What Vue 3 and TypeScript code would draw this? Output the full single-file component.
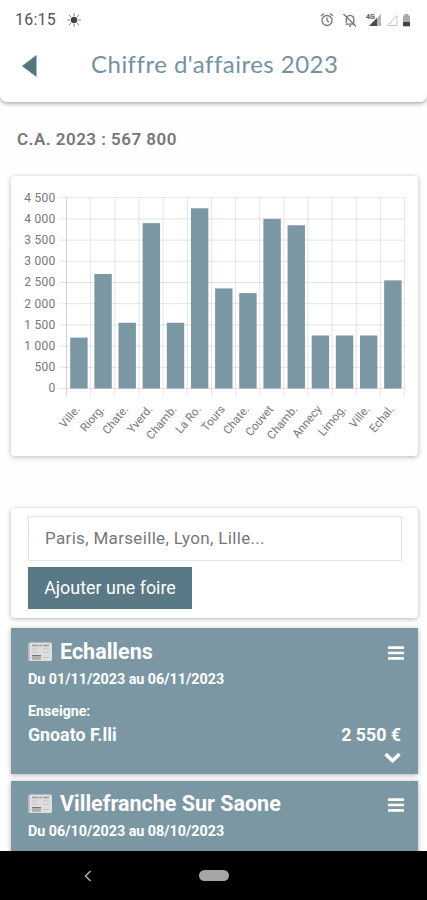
<script setup lang="ts">
interface Bar { label: string; value: number }
interface Fair { name: string; dates: string; sale?: { sign: string; amount: string } }

const bars: Bar[] = [
  { label: 'Ville.', value: 1200 },
  { label: 'Riorg.', value: 2700 },
  { label: 'Chate.', value: 1550 },
  { label: 'Yverd.', value: 3900 },
  { label: 'Chamb.', value: 1550 },
  { label: 'La Ro.', value: 4250 },
  { label: 'Tours', value: 2360 },
  { label: 'Chate.', value: 2250 },
  { label: 'Couvet', value: 4000 },
  { label: 'Chamb.', value: 3850 },
  { label: 'Annecy', value: 1250 },
  { label: 'Limog.', value: 1250 },
  { label: 'Ville.', value: 1250 },
  { label: 'Echal.', value: 2550 },
]
const fairs: Fair[] = [
  { name: 'Echallens', dates: 'Du 01/11/2023 au 06/11/2023', sale: { sign: 'Gnoato F.lli', amount: '2 550 €' } },
  { name: 'Villefranche Sur Saone', dates: 'Du 06/10/2023 au 08/10/2023' },
]
const ticks = ['0', '500', '1 000', '1 500', '2 000', '2 500', '3 000', '3 500', '4 000', '4 500']

const left = 55.5
const base = 212.5
const col = 24.15
const unit = 21.2 / 500
const colX = (i: number): number => left + i * col
const tickY = (i: number): number => base - i * 21.2
</script>

<template>
  <div class="screen">
    <header class="top">
      <div class="status">
        <span class="clock">16:15</span>
        <svg class="sun" width="16" height="16" viewBox="0 0 16 16">
          <circle cx="8" cy="8" r="3.3" fill="#444" />
          <path d="M8 1v3M8 12v3M1 8h3M12 8h3M3 3l2 2M11 11l2 2M13 3l-2 2M3 13l2-2" stroke="#888" stroke-width="1" />
        </svg>
        <svg class="tray" width="94" height="18" viewBox="0 0 94 18">
          <g fill="none" stroke="#777" stroke-width="1.3">
            <circle cx="8" cy="9.500" r="5" />
            <path d="M2 5l3-2.600M14 5l-3-2.600M8 6.500v3.200l2 1.400" />
            <path d="M26.500 13.200h9.200M27.300 12V8.500q0-4 3.800-4.200q3.700.2 3.700 4.200V12M30 15h2.200M24.500 3l12.500 12.500" />
          </g>
          <path d="M50 15L62 3v12z" fill="#b5b5b5" />
          <path d="M50 15l8-8v8z" fill="#4a4a4a" />
          <text x="47" y="8" class="net">4G</text>
          <path d="M68.500 14.500L78 4.500v10z" fill="none" stroke="#c4c4c4" />
          <path d="M84 4.500h1.700V3h3.600v1.500H91V11h-7z" fill="#aaa" />
          <path d="M84 11h7v4.300h-7z" fill="#444" />
        </svg>
      </div>
      <div class="titlebar">
        <svg class="back" width="15" height="22" viewBox="0 0 15 22"><path d="M0 11L14.500 0v22z" fill="#55757f" /></svg>
        <h1>Chiffre d'affaires 2023</h1>
      </div>
    </header>

    <main>
      <p class="total">C.A. 2023 : 567 800</p>

      <section class="card chart">
        <svg width="407" height="280" viewBox="0 0 407 280">
          <g class="grid">
            <line v-for="(_, i) in ticks" :key="'h' + i" x1="48" :x2="colX(14)" :y1="tickY(i)" :y2="tickY(i)" />
            <line v-for="i in 15" :key="'v' + i" :x1="colX(i - 1)" :x2="colX(i - 1)" y1="21.500" y2="220" :class="{ axis: i === 1 }" />
          </g>
          <text v-for="(t, i) in ticks" :key="t" x="44.500" :y="tickY(i) + 3.800" class="tick" text-anchor="end">{{ t }}</text>
          <g v-for="(b, i) in bars" :key="i">
            <rect :x="colX(i) + 3.700" :y="base - b.value * unit" width="17.400" :height="b.value * unit" fill="#7b97a4" />
            <text class="name" text-anchor="end" :transform="`translate(${colX(i) + 14.200} 233.500) rotate(-50)`">{{ b.label }}</text>
          </g>
        </svg>
      </section>

      <section class="card form">
        <input class="city" type="text" placeholder="Paris, Marseille, Lyon, Lille..." />
        <button class="add" type="button">Ajouter une foire</button>
      </section>

      <article v-for="f in fairs" :key="f.name" class="fair">
        <div class="fair-head">
          <svg class="news" width="25" height="20" viewBox="0 0 25 20">
            <rect x=".5" y=".5" width="23.500" height="18.500" rx="1.500" fill="#dedede" />
            <path d="M1 2v16.500" stroke="#b9bdbf" stroke-width="1.500" />
            <path d="M4 3.500h17" stroke="#999" stroke-width="1.500" stroke-dasharray="6 1 3 1" />
            <path d="M4 7h5M4 10h4M15 7h6M16 10.500h5M15 15.500h6" stroke="#c4c4c4" />
            <path d="M4 13h9v5H4z" fill="#b0b0b0" />
            <path d="M4 13.500h9" stroke="#777" />
          </svg>
          <h2>{{ f.name }}</h2>
          <svg class="menu" width="16" height="14" viewBox="0 0 16 14"><path d="M0 1.600h16M0 7h16M0 12.400h16" stroke="#fff" stroke-width="2.600" /></svg>
        </div>
        <p class="dates">{{ f.dates }}</p>
        <template v-if="f.sale">
          <p class="caption">Enseigne:</p>
          <div class="sale"><span>{{ f.sale.sign }}</span><span>{{ f.sale.amount }}</span></div>
          <svg class="more" width="17" height="12" viewBox="0 0 17 12"><path d="M1.500 2l7 6.800L15.500 2" fill="none" stroke="#fff" stroke-width="3.600" /></svg>
        </template>
      </article>
    </main>

    <nav class="android">
      <svg class="nav-back" width="8" height="12" viewBox="0 0 8 12"><path d="M6.500 1L1.500 6l5 5" fill="none" stroke="#aaa" stroke-width="1.600" /></svg>
      <span class="home"></span>
    </nav>
  </div>
</template>

<style>
body { margin: 0; background: #fff; }
</style>

<style scoped>
* { box-sizing: border-box; }
.screen { width: 427px; height: 900px; overflow: hidden; display: flex; flex-direction: column; background: #fefefe; font-family: Roboto, "Liberation Sans", sans-serif; }
h1, h2, p { margin: 0; }
.top { flex: none; height: 102px; background: #fff; border-radius: 0 0 7px 7px; box-shadow: 0 1px 5px rgba(0, 0, 0, .42); }
.status { height: 38px; padding: 0 12px 0 15px; display: flex; align-items: center; }
.clock { font-size: 16px; letter-spacing: .25px; color: #555; padding-top: 1px; }
.sun { margin-left: 10px; margin-top: 1px; }
.tray { margin-left: auto; margin-right: 2px; margin-top: 1px; }
.net { font-size: 7px; font-weight: 700; fill: #555; }
.titlebar { display: flex; align-items: center; height: 56px; padding-left: 22px; }
.back { flex: none; }
h1 { margin: -4px 0 0 54px; font: 400 24px/32px Lato, sans-serif; letter-spacing: .48px; color: #7392a3; white-space: nowrap; }
main { flex: 1; min-height: 0; overflow: hidden; padding: 0 9px 0 11px; }
.total { height: 74px; padding: 26px 0 0 6px; font-size: 17px; line-height: 22px; font-weight: 600; letter-spacing: .48px; color: #777; }
.card { background: #fff; border-radius: 4px; box-shadow: 0 1px 5px rgba(0, 0, 0, .28); }
.chart { height: 280px; }
.chart svg { display: block; }
.grid line { stroke: #000; stroke-opacity: .1; stroke-width: 1; }
.grid .axis { stroke-opacity: .18; }
.tick { font-size: 12px; fill: #777; letter-spacing: .25px; }
.name { font-size: 11.600px; fill: #777; }
.form { margin-top: 52px; height: 110px; padding: 8px 17px 0 17px; display: flex; flex-direction: column; align-items: flex-start; gap: 6px; }
.city { width: 374px; height: 45px; border: 1px solid #e5e5e5; background: #fff; padding: 0 16px 2px; font: 400 17px Roboto, sans-serif; letter-spacing: .33px; outline: 0; }
.city::placeholder { color: #777; opacity: 1; }
.add { width: 164px; height: 42px; padding: 0 0 1px; border: 0; background: #5a7987; color: #fff; font: 400 17.900px Roboto, sans-serif; }
.fair { margin-top: 10px; height: 146px; padding: 12px 14px 0 17px; background: #7b97a4; color: #fff; font-weight: 700; box-shadow: 0 1px 5px rgba(0, 0, 0, .3); display: flex; flex-direction: column; }
.fair + .fair { margin-top: 7px; padding-top: 11px; }
.fair-head { display: flex; align-items: center; height: 24px; }
h2 { margin-left: 7px; font-size: 21.500px; line-height: 24px; font-weight: 700; }
.menu { margin-left: auto; margin-top: 2px; }
.dates { margin-top: 7px; font-size: 14.300px; line-height: 16px; }
.caption { margin-top: 16px; font-size: 14.200px; line-height: 16px; }
.sale { display: flex; justify-content: space-between; padding-right: 3px; margin-top: 6px; font-size: 17.800px; line-height: 20px; }
.more { align-self: flex-end; margin: 7px 3px 0 0; }
.android { flex: none; height: 49px; background: #000; display: flex; align-items: center; padding-left: 84px; }
.home { width: 30px; height: 11px; border-radius: 6px; background: #a5a5a5; margin-left: 107px; }
</style>
